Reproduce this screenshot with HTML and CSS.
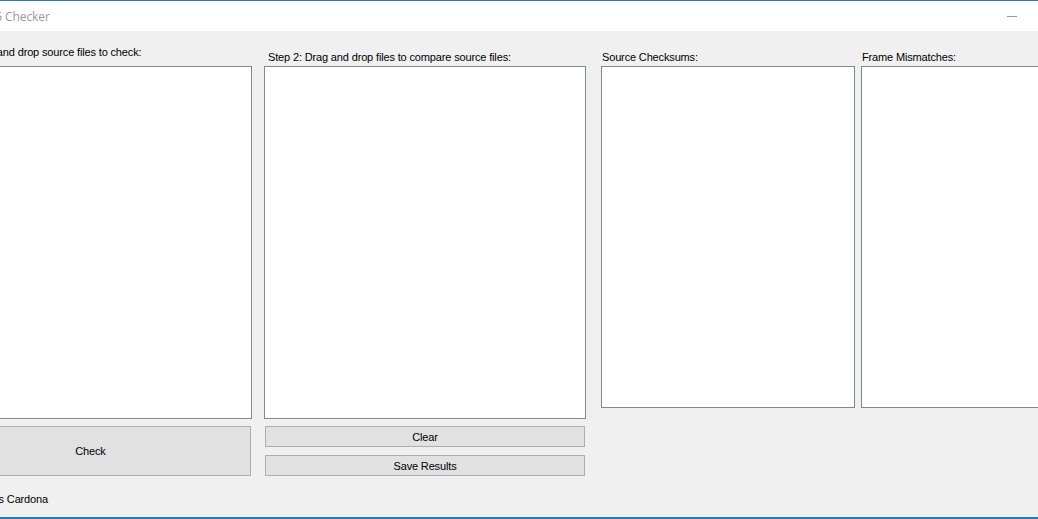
FILE: index.html
```html
<!DOCTYPE html>
<html lang="en">
  <head>
    <meta charset="UTF-8" />
    <meta name="viewport" content="width=device-width, initial-scale=1.0" />
    <title>MD5 Checker</title>
    <link rel="stylesheet" href="styles.css">
  </head>
  <body>
    <div class="window">
      <div class="title-bar">
        <span class="title">MD5 Checker</span>
        <span class="min-btn"></span>
      </div>
      <div class="client">
        <div class="col col-source">
          <p class="label label-first">Step 1: Drag and drop source files to check:</p>
          <div class="listbox"></div>
          <button class="btn btn-check">Check</button>
          <p class="credit">Luis Cardona</p>
        </div>
        <div class="col col-compare">
          <p class="label">Step 2: Drag and drop files to compare source files:</p>
          <div class="listbox"></div>
          <button class="btn btn-small">Clear</button>
          <button class="btn btn-small btn-save">Save Results</button>
        </div>
        <div class="col col-sums">
          <p class="label label-tight">Source Checksums:</p>
          <div class="listbox listbox-short"></div>
        </div>
        <div class="col col-mismatch">
          <p class="label label-tight">Frame Mismatches:</p>
          <div class="listbox listbox-short"></div>
        </div>
      </div>
    </div>
  </body>
</html>
```

FILE: styles.css
```css
* {
  margin: 0;
  padding: 0;
  box-sizing: border-box;
}

body {
  width: 1038px;
  height: 519px;
  overflow: hidden;
  font-family: 'Liberation Sans', Arial, sans-serif;
  font-size: 11px;
  letter-spacing: -0.15px;
  color: #000;
  background: #f0f0f0;
}

.window {
  height: 519px;
  border-top: 1px solid #2b79b5;
  border-bottom: 2px solid #2b79b5;
  display: flex;
  flex-direction: column;
  overflow: hidden;
}

.title-bar {
  height: 30px;
  background: #fff;
  display: flex;
  align-items: center;
  justify-content: space-between;
}

.title {
  margin-left: -24px;
  font-family: 'Open Sans', 'Noto Sans', sans-serif;
  font-size: 12px;
  letter-spacing: -0.1px;
  color: #999;
}

.min-btn {
  width: 10px;
  height: 1px;
  background: #999;
  margin-right: 21px;
}

.client {
  flex: 1;
  display: flex;
  margin-left: -70px;
}

.col {
  display: flex;
  flex-direction: column;
  flex-shrink: 0;
}

.label {
  height: 35px;
  padding: 20px 0 0 4px;
  line-height: 13px;
  white-space: nowrap;
}

.label-first {
  padding-top: 15px;
}

.label-tight {
  padding-left: 1px;
}

.listbox {
  background: #fff;
  border: 1px solid #828790;
  height: 353px;
}

.listbox-short {
  height: 342px;
}

.col-source {
  width: 322px;
}

.col-compare {
  width: 322px;
  margin-left: 12px;
}

.col-sums {
  width: 254px;
  margin-left: 15px;
}

.col-mismatch {
  width: 260px;
  margin-left: 6px;
}

.btn {
  font-family: 'Liberation Sans', Arial, sans-serif;
  font-size: 11px;
  letter-spacing: -0.15px;
  color: #000;
  background: #e1e1e1;
  border: 1px solid #adadad;
}

.btn-check {
  width: 321px;
  height: 50px;
  margin-top: 7px;
}

.btn-small {
  width: 320px;
  height: 21px;
  margin-left: 1px;
  margin-top: 7px;
}

.btn-save {
  margin-top: 8px;
}

.credit {
  padding-top: 17px;
  line-height: 13px;
  text-align: right;
  width: 118px;
  white-space: nowrap;
}
```
